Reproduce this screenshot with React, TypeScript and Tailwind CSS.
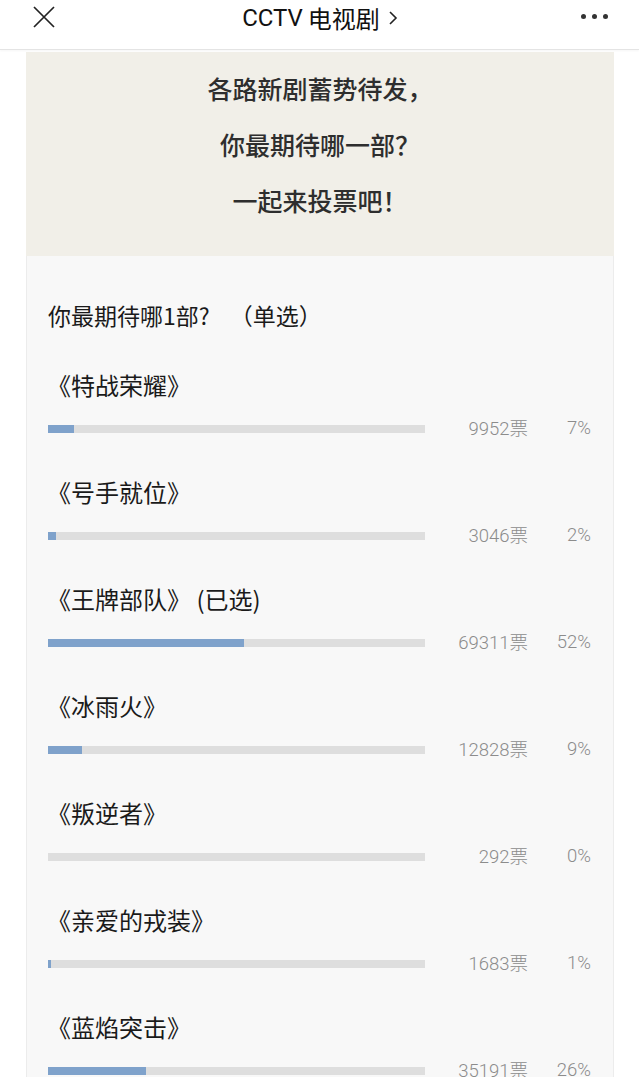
type Option = {
  name: string;
  votes: number;
  pct: number;
};

const options: Option[] = [
  { name: '《特战荣耀》', votes: 9952, pct: 7 },
  { name: '《号手就位》', votes: 3046, pct: 2 },
  { name: '《王牌部队》 (已选)', votes: 69311, pct: 52 },
  { name: '《冰雨火》', votes: 12828, pct: 9 },
  { name: '《叛逆者》', votes: 292, pct: 0 },
  { name: '《亲爱的戎装》', votes: 1683, pct: 1 },
  { name: '《蓝焰突击》', votes: 35191, pct: 26 },
];

const cjk = "font-['Noto_Sans_CJK_SC','Noto_Sans',sans-serif]";

const Header = () => (
  <div className="flex h-[50px] items-start border-b border-[#e4e4e4] bg-white pl-[33px] pr-[31px] shadow-[0_1px_2px_rgba(0,0,0,0.04)]">
    <svg className="mt-[6px] h-[22px] w-[22px]" viewBox="0 0 22 22" fill="none" stroke="#222" strokeWidth="1.7">
      <path d="M1 1L21 21M21 1L1 21" />
    </svg>
    <div className="flex flex-1 items-center justify-center pl-[4px] pt-[3px] text-[24px] leading-[30px] text-[#111]">
      <span className="font-['Roboto',sans-serif]">CCTV</span>
      <span className={`ml-[5px] ${cjk}`}>电视剧</span>
      <svg className="ml-[8px] h-[16px] w-[10px]" viewBox="0 0 10 16" fill="none" stroke="#222" strokeWidth="1.6">
        <path d="M2 2L8 8L2 14" />
      </svg>
    </div>
    <div className="mt-[14px] flex items-center gap-[6px]">
      <span className="h-[5px] w-[5px] rounded-full bg-[#333]" />
      <span className="h-[5px] w-[5px] rounded-full bg-[#333]" />
      <span className="h-[5px] w-[5px] rounded-full bg-[#333]" />
    </div>
  </div>
);

const Row = ({ o }: { o: Option }) => (
  <div className="flex flex-col">
    <div className="-ml-[1px] h-[30px] text-[24px] leading-[30px] text-[#1a1a1a]">{o.name}</div>
    <div className="mt-[17px] flex h-[24px] items-center">
      <div className="h-[8px] w-[377px] bg-[#dedede]">
        <div className="h-full bg-[#7fa2cb]" style={{ width: `${o.pct === 1 ? 0.7 : o.pct}%` }} />
      </div>
      <div className="w-[103px] text-right font-['Roboto',sans-serif] text-[18.5px] font-light text-[#8c8c8c]">
        {o.votes}
        <span className={cjk}>票</span>
      </div>
      <div className="w-[63px] text-right font-['Roboto',sans-serif] text-[18.5px] font-light text-[#8c8c8c]">{o.pct}%</div>
    </div>
  </div>
);

export default function App() {
  return (
    <div className={`min-h-[1077px] w-[639px] overflow-hidden bg-white ${cjk}`}>
      <Header />
      <div className="mx-[26px] mt-[2px] w-[588px]">
        <div className="h-[204px] bg-[#f1efe8] pt-[8px] text-center text-[25px] font-medium leading-[56px] text-[#2e2e2e]">
          <div>各路新剧蓄势待发，</div>
          <div>你最期待哪一部？</div>
          <div>一起来投票吧！</div>
        </div>
        <div className="border-x border-[#ececec] bg-[#f8f8f8] pb-[40px] pl-[21px] pt-[44px]">
          <div className="flex h-[30px] text-[23px] leading-[30px] text-[#1a1a1a]">
            <span>你最期待哪1部?</span>
            <span className="ml-[20px]">（单选）</span>
          </div>
          <div className="mt-[40px] flex flex-col gap-[36px]">
            {options.map((o) => (
              <Row key={o.name} o={o} />
            ))}
          </div>
        </div>
      </div>
    </div>
  );
}
